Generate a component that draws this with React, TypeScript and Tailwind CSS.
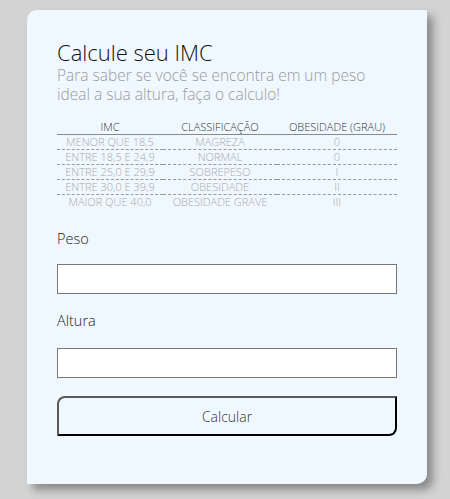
import { useState } from "react";

type rowType = {
    imc: string;
    classificacao: string;
    grau: string;
};

const rows: rowType[] = [
    { imc: "Menor que 18,5", classificacao: "Magreza", grau: "0" },
    { imc: "Entre 18,5 e 24,9", classificacao: "Normal", grau: "0" },
    { imc: "Entre 25,0 e 29,9", classificacao: "Sobrepeso", grau: "I" },
    { imc: "Entre 30,0 e 39,9", classificacao: "Obesidade", grau: "II" },
    { imc: "Maior que 40,0", classificacao: "Obesidade grave", grau: "III" },
];

export default function App() {
    const [peso, setPeso] = useState("");
    const [altura, setAltura] = useState("");

    return (
        <div className="min-h-[499px] w-full bg-[#d3d3d3] pt-[10px] pl-[27px] font-['Open_Sans',sans-serif]">
            <div className="w-[400px] h-[474px] bg-[#f0f8ff] rounded-tl-[10px] rounded-br-[10px] shadow-[6px_6px_8px_rgba(0,0,0,0.35)] px-[30px] pt-[28px]">
                <h1 className="text-[22px] leading-[28px] font-light text-[#111]">Calcule seu IMC</h1>
                <p className="text-[15.5px] leading-[19px] font-light text-[#9a9a9a] pr-4">
                    Para saber se você se encontra em um peso ideal a sua altura, faça o calculo!
                </p>

                {/* tabela */}
                <table className="w-[340px] mt-[16px] border-collapse table-fixed text-[11px] font-light uppercase">
                    <thead>
                        <tr className="border-b border-[#8a8a8a] text-[#333]">
                            <th className="w-[106px] font-light leading-[14px]">IMC</th>
                            <th className="w-[114px] font-light leading-[14px]">Classificação</th>
                            <th className="w-[120px] font-light leading-[14px]">Obesidade (grau)</th>
                        </tr>
                    </thead>
                    <tbody className="text-[#a8a8a8]">
                        {rows.map((r, i) => (
                            <tr key={r.imc} className={i < rows.length - 1 ? "border-b border-dashed border-[#9a9a9a]" : ""}>
                                <td className="text-center leading-[14px] whitespace-nowrap">{r.imc}</td>
                                <td className="text-center leading-[14px] whitespace-nowrap">{r.classificacao}</td>
                                <td className="text-center leading-[14px]">{r.grau}</td>
                            </tr>
                        ))}
                    </tbody>
                </table>

                <label className="block mt-[21px] text-[14.5px] leading-[18px] font-light text-[#222]">Peso</label>
                <input
                    value={peso}
                    onChange={(e) => setPeso(e.target.value)}
                    className="block w-[340px] h-[30px] mt-[16px] bg-white border border-[#777] outline-none px-2"
                />

                <label className="block mt-[18px] text-[14.5px] leading-[18px] font-light text-[#222]">Altura</label>
                <input
                    value={altura}
                    onChange={(e) => setAltura(e.target.value)}
                    className="block w-[340px] h-[30px] mt-[18px] bg-white border border-[#777] outline-none px-2"
                />

                <button className="block w-[340px] h-[40px] mt-[18px] bg-[#f0f8ff] border-2 border-t-[#5a5a5a] border-l-[#5a5a5a] border-r-black border-b-black rounded-tl-[8px] rounded-br-[8px] text-[14px] font-light text-[#333]">
                    Calcular
                </button>
            </div>
        </div>
    );
}
